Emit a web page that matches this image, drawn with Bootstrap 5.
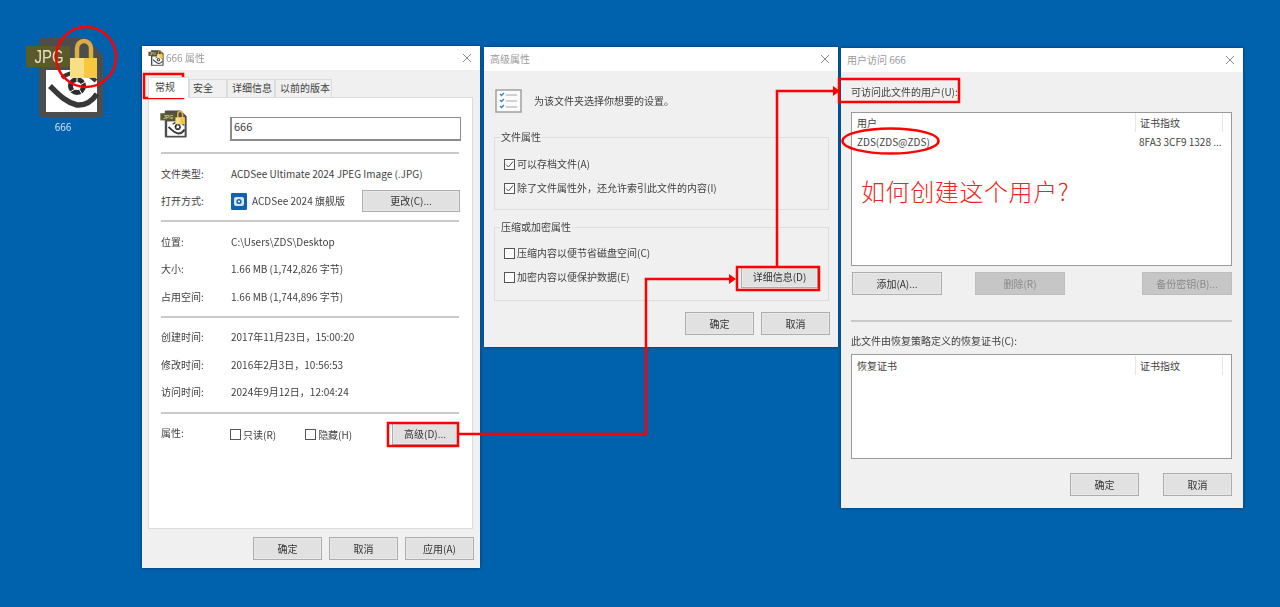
<!DOCTYPE html>
<html lang="zh-CN">
<head>
<meta charset="utf-8">
<title>用户访问 666</title>
<link href="https://cdn.jsdelivr.net/npm/bootstrap@5.3.0/dist/css/bootstrap.min.css" rel="stylesheet">
<style>
html,body{height:100%;overflow:hidden}
body{background:#0061ad;font-family:"Noto Sans CJK SC","Liberation Sans",sans-serif;font-size:10px;line-height:14px;color:#3f3f3f}
.desk{position:relative;width:1280px;height:607px;overflow:hidden;filter:blur(.4px)}
.win{position:absolute;background:#f0f0f0;box-shadow:0 0 3px rgba(0,0,0,.45);display:flex;flex-direction:column}
.w1{left:142px;top:46px;width:338px;height:522px}
.w2{left:484px;top:47px;width:354px;height:300px}
.w3{left:841px;top:48px;width:402px;height:460px}
.tbar{height:24px;background:#fff;color:#9a9a9a;padding:0 8px 1px 6px;flex:none}
.ttl-x{margin-left:auto}
.ttl-ic{margin-right:2px;flex:none}
.tabs{height:27px;padding:9px 0 0 6px;flex:none}
.tb{height:18px;border:1px solid #dcdcdc;border-bottom:0;background:#f0f0f0;padding:1px 0 0 4px;white-space:nowrap}
.tb-a{width:41px;height:21px;margin-top:-2px;padding:2px 0 0 6px;background:#fff;position:relative;z-index:1}
.tb-b{width:38px;padding-left:3px}
.tb-c{width:48px}
.tb-d{width:57px}
.pg{background:#fff;border:1px solid #dcdcdc;margin:0 7px 0 6px;height:432px;padding:12px 13px 0 12px;flex:none}
.head-ic{margin-left:-1px;flex:none}
.sep{height:2px;background:#c9c9c9;flex:none}
.rw{display:flex;align-items:center;height:14px}
.rw-o{height:22px}
.rw-a{height:23px}
.lb{width:70px;flex:none}
.lb-up{margin-top:-1px}
.btnw{background:#e1e1e1;border:1px solid #adadad;height:23px;width:69px;display:flex;align-items:center;justify-content:center;color:#333;flex:none;box-shadow:0 0 0 1px #e8e8e8 inset}
.btnw.off{background:#c6c6c6;border-color:#bdbdbd;color:#8a8a8a;box-shadow:none;width:90px}
.btn-chg{width:98px;height:22px;margin-right:-1px}
.btn-adv{width:66px;margin-right:1px}
.btn-det{width:77px;height:22px;margin-top:-1px}
.btn-add{width:90px}
.btn-del{margin-left:33px}
.cb{width:11px;height:11px;border:1px solid #555;background:#fff;flex:none;margin-right:2px;display:flex}
.cb-a{margin-left:-1px}
.cb-b{margin-left:29px}
.low{margin-top:2px}
.nm{width:231px;height:24px;border:1px solid #8c8c8c;border-width:1px 1px 2px 2px;padding:1px 2px;font-size:11px;margin:7px 0 0 43px;flex:none}
.app-ic{margin-right:5px;flex:none}
.acts{gap:7px}
.acts-1{margin:8px 6px 0 0}
.acts-2{margin:11px 8px 0 0}
.acts-3{gap:24px;margin:14px 11px 0 0}
.intro{padding:18px 0 0 11px;height:42px}
.intro-t{margin-left:12px}
.grp{border:1px solid #dedede;margin:0 9px 0 10px;position:relative;padding:0 10px 0 9px}
.g1{margin-top:24px;height:73px}
.g2{margin-top:17px;height:74px}
.leg{position:absolute;left:5px;top:-8px;background:#f0f0f0;padding:0 1px}
.t8{margin-top:8px}.t9{margin-top:9px}.t10{margin-top:10px}.t11{margin-top:11px}.t12{margin-top:12px}.t13{margin-top:13px}.t14{margin-top:14px}.t18{margin-top:18px}.t19{margin-top:19px}
.lab{margin-left:10px}
.lab-1{margin-top:13px}
.lab-2{margin-top:12px}
.lst{background:#fff;border:1px solid #9a9a9a;margin:0 11px 0 10px;padding:0 5px;position:relative;flex:none}
.lst-1{height:154px;margin-top:13px}
.lst-2{height:105px;margin-top:6px}
.hd{display:flex;height:21px;align-items:center}
.hd-s{height:19px}
.cf{margin-left:auto;width:88px;border-left:1px solid #e6e6e6;border-right:1px solid #e6e6e6;padding-left:4px;height:19px;line-height:19px;margin-right:3px}
.hd-row{margin-top:3px}
.fp{width:87px}
.big{color:#ef2420;font-size:24px;line-height:30px;font-weight:300;letter-spacing:.6px;margin:27px 0 0 4px}
.btns3{margin:6px 11px 0 11px}
.sep3{margin:25px 11px 0 10px}
.marks{position:absolute;left:0;top:0;width:1280px;height:607px;pointer-events:none}
.dsk-ic{position:absolute;left:25px;top:37px}
.dsk-nm{position:absolute;left:43px;top:120px;width:40px;text-align:center;color:#d6e6f5}
.defs{position:absolute;width:0;height:0}
</style>
</head>
<body>
<svg class="defs">
<defs>
<symbol id="fic" viewBox="5 5 79 81">
<path d="M22 6h44l17 17v59a3 3 0 0 1-3 3H22a3 3 0 0 1-3-3V9a3 3 0 0 1 3-3z" fill="#4d4d4d"/>
<rect x="26" y="38" width="51" height="42" fill="#fff"/>
<path d="M30 54c8 8 15 16 27 19 9 1 15-4 20-11" fill="none" stroke="#383838" stroke-width="5.500"/>
<path d="M42 46c7-7 23-8 34 3" fill="none" stroke="#383838" stroke-width="4"/>
<circle cx="57" cy="54" r="9" fill="#2c2c2c"/><circle cx="57" cy="54" r="4" fill="#fff"/>
<path d="M57 45v6M65 50l-5 3M62 62l-3-5M50 60l5-3" stroke="#fff" stroke-width="1"/>
<rect x="6" y="14" width="44" height="21" fill="#5c5a2b"/>
<text x="29" y="31" text-anchor="middle" font-family="Liberation Sans" font-size="18" textLength="29" lengthAdjust="spacingAndGlyphs" fill="#e6e2c4">JPG</text>
<path d="M57 30V16a7 7 0 0 1 14 0v14" fill="none" stroke="#dcae42" stroke-width="4.500"/>
<rect x="50" y="26" width="27" height="20" fill="#f8de84"/><rect x="64" y="26" width="13" height="20" fill="#f5c840"/>
</symbol>
</defs>
</svg>
<div class="desk">
  <svg class="dsk-ic" width="79" height="81" role="img" aria-label="666"><use href="#fic"/></svg>
  <div class="dsk-nm">666</div>

  <section class="win w1">
    <div class="tbar d-flex align-items-center">
      <svg class="ttl-ic" width="16" height="16"><use href="#fic"/></svg><span>666 属性</span>
      <svg class="ttl-x" width="10" height="10"><path d="M1 1l8 8M9 1l-8 8" stroke="#8a8a8a"/></svg>
    </div>
    <div class="tabs d-flex">
      <div class="tb tb-a">常规</div><div class="tb tb-b">安全</div><div class="tb tb-c">详细信息</div><div class="tb tb-d">以前的版本</div>
    </div>
    <div class="pg">
      <div class="d-flex align-items-start">
        <svg class="head-ic" width="27" height="28"><use href="#fic"/></svg>
        <div class="nm">666</div>
      </div>
      <div class="sep t11"></div>
      <div class="rw t13"><span class="lb">文件类型:</span><span>ACDSee Ultimate 2024 JPEG Image (.JPG)</span></div>
      <div class="rw rw-o t9"><span class="lb">打开方式:</span>
        <svg class="app-ic" width="16" height="17" viewBox="0 0 16 17"><rect width="16" height="17" rx="1" fill="#1263ad"/><rect x="3" y="4" width="10" height="9" rx="2" fill="#cfe6f6"/><circle cx="8" cy="8.500" r="2.600" fill="#1263ad"/><circle cx="8" cy="8.500" r="1.100" fill="#fff"/></svg>
        <span>ACDSee 2024 旗舰版</span>
        <div class="btnw btn-chg ms-auto">更改(C)...</div>
      </div>
      <div class="sep t8"></div>
      <div class="rw t13"><span class="lb">位置:</span><span>C:\Users\ZDS\Desktop</span></div>
      <div class="rw t13"><span class="lb">大小:</span><span>1.66 MB (1,742,826 字节)</span></div>
      <div class="rw t14"><span class="lb">占用空间:</span><span>1.66 MB (1,744,896 字节)</span></div>
      <div class="sep t12"></div>
      <div class="rw t12"><span class="lb">创建时间:</span><span>2017年11月23日，15:00:20</span></div>
      <div class="rw t14"><span class="lb">修改时间:</span><span>2016年2月3日，10:56:53</span></div>
      <div class="rw t13"><span class="lb">访问时间:</span><span>2024年9月12日，12:04:24</span></div>
      <div class="sep t13"></div>
      <div class="rw rw-a t8"><span class="lb lb-up">属性:</span>
        <span class="cb cb-a low"></span><span class="low">只读(R)</span>
        <span class="cb cb-b low"></span><span class="low">隐藏(H)</span>
        <div class="btnw btn-adv ms-auto">高级(D)...</div>
      </div>
    </div>
    <div class="d-flex justify-content-end acts acts-1">
      <div class="btnw">确定</div><div class="btnw">取消</div><div class="btnw">应用(A)</div>
    </div>
  </section>

  <section class="win w2">
    <div class="tbar d-flex align-items-center"><span>高级属性</span>
      <svg class="ttl-x" width="10" height="10"><path d="M1 1l8 8M9 1l-8 8" stroke="#8a8a8a"/></svg></div>
    <div class="d-flex align-items-center intro">
      <svg width="27" height="24" viewBox="0 0 27 24"><rect x="1" y="1" width="25" height="22" fill="#fbfbfb" stroke="#a0a0a0" stroke-width="1.500"/><path d="M5 5l1.500 1.500L9 4M5 11l1.500 1.500L9 10M5 17l1.500 1.500L9 16" fill="none" stroke="#3c83c4" stroke-width="1.400"/><path d="M11 6h11M11 12h11M11 18h11" stroke="#c4c4c4" stroke-width="1.500"/></svg>
      <span class="intro-t">为该文件夹选择你想要的设置。</span>
    </div>
    <div class="grp g1">
      <div class="leg">文件属性</div>
      <div class="rw t19"><span class="cb"><svg class="d-block" width="9" height="9"><path d="M1 4.500l2.500 2.500L8 1.500" fill="none" stroke="#444"/></svg></span>可以存档文件(A)</div>
      <div class="rw t10"><span class="cb"><svg class="d-block" width="9" height="9"><path d="M1 4.500l2.500 2.500L8 1.500" fill="none" stroke="#444"/></svg></span>除了文件属性外，还允许索引此文件的内容(I)</div>
    </div>
    <div class="grp g2">
      <div class="leg">压缩或加密属性</div>
      <div class="rw t18"><span class="cb"></span>压缩内容以便节省磁盘空间(C)</div>
      <div class="rw t10"><span class="cb"></span>加密内容以便保护数据(E)
        <div class="btnw btn-det ms-auto">详细信息(D)</div></div>
    </div>
    <div class="d-flex justify-content-end acts acts-2">
      <div class="btnw">确定</div><div class="btnw">取消</div>
    </div>
  </section>

  <section class="win w3">
    <div class="tbar d-flex align-items-center"><span>用户访问 666</span>
      <svg class="ttl-x" width="10" height="10"><path d="M1 1l8 8M9 1l-8 8" stroke="#8a8a8a"/></svg></div>
    <div class="lab lab-1">可访问此文件的用户(U):</div>
    <div class="lst lst-1">
      <div class="hd hd-s"><span>用户</span><span class="cf">证书指纹</span></div>
      <div class="d-flex justify-content-between hd-row"><span>ZDS(ZDS@ZDS)</span><span class="fp">8FA3 3CF9 1328 ...</span></div>
      <div class="big">如何创建这个用户?</div>
    </div>
    <div class="d-flex btns3">
      <div class="btnw btn-add">添加(A)...</div>
      <div class="btnw off btn-del">删除(R)</div>
      <div class="btnw off ms-auto">备份密钥(B)...</div>
    </div>
    <div class="sep sep3"></div>
    <div class="lab lab-2">此文件由恢复策略定义的恢复证书(C):</div>
    <div class="lst lst-2">
      <div class="hd"><span>恢复证书</span><span class="cf">证书指纹</span></div>
    </div>
    <div class="d-flex justify-content-end acts-3">
      <div class="btnw">确定</div><div class="btnw">取消</div>
    </div>
  </section>

  <svg class="marks" viewBox="0 0 1280 607" fill="none" stroke="#f00" stroke-width="2.500">
    <circle cx="86" cy="57" r="30"/>
    <rect x="144" y="74" width="39" height="24"/>
    <rect x="388" y="423" width="70" height="23"/>
    <path d="M458 434H646V279H729"/>
    <path d="M729 274l7 5-7 5z" fill="#f00" stroke="none"/>
    <rect x="737" y="267" width="82" height="23"/>
    <path d="M777 266V91H833"/>
    <path d="M833 86l7 5-7 5z" fill="#f00" stroke="none"/>
    <rect x="839" y="79" width="120" height="23"/>
    <ellipse cx="890.500" cy="141" rx="48" ry="12.500"/>
  </svg>
</div>
</body>
</html>
